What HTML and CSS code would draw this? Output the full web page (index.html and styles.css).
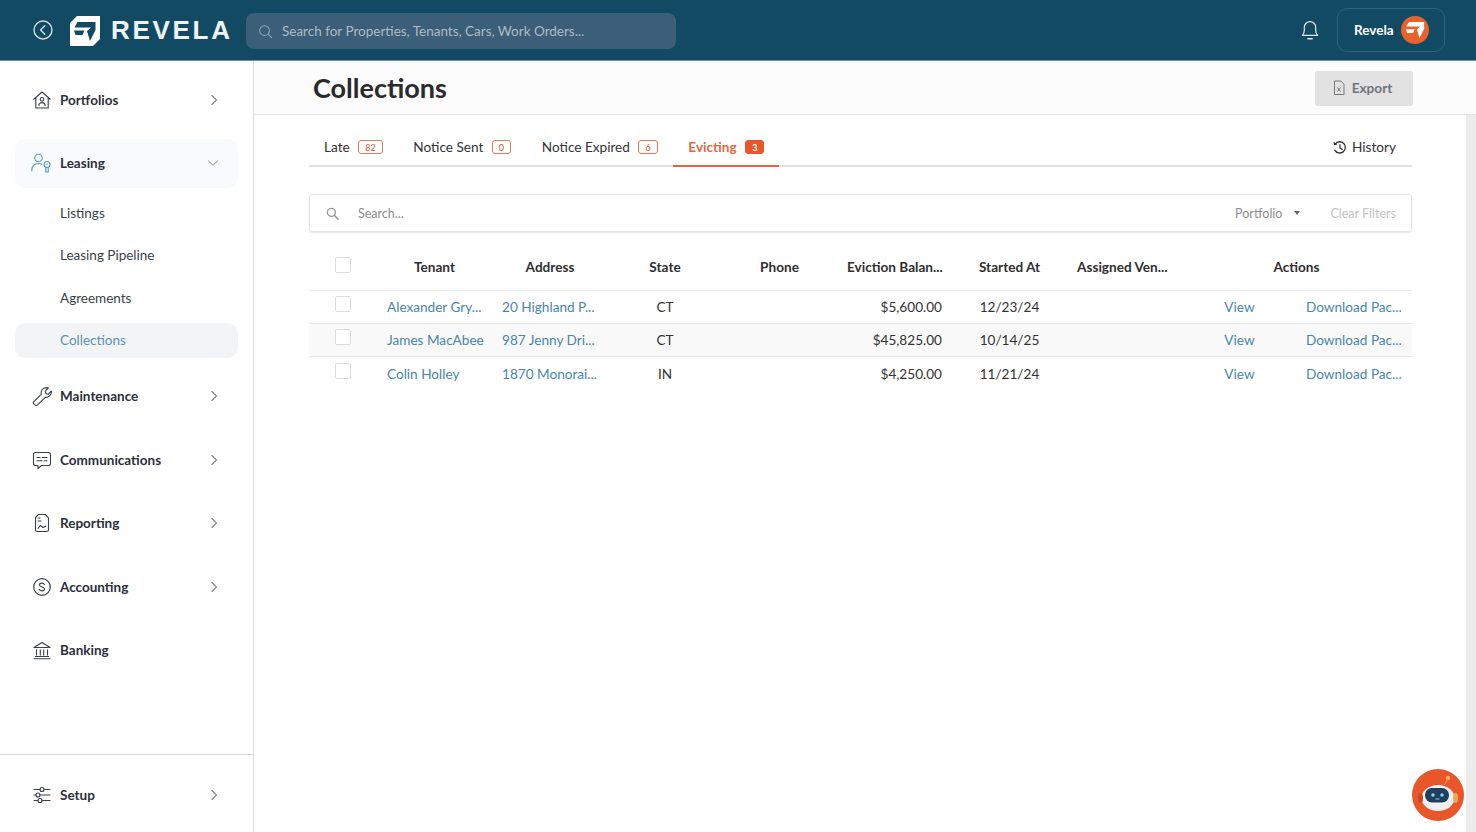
FILE: index.html
```html
<!DOCTYPE html>
<html lang="en">
<head>
<meta charset="utf-8">
<title>Collections</title>
<link rel="stylesheet" href="styles.css">
</head>
<body>
<header class="topbar">
  <svg class="back" viewBox="0 0 20 20" width="20" height="20"><circle cx="10" cy="10" r="9" fill="none" stroke="#cfe0e6" stroke-width="1.4"/><path d="M11.8 5.8 7.6 10l4.2 4.2" fill="none" stroke="#cfe0e6" stroke-width="1.4" stroke-linecap="round" stroke-linejoin="round"/></svg>
  <svg class="logo" viewBox="0 0 30 30" width="30" height="30"><path d="M7 0H30V23L23 30H0V7Z" fill="#fff"/><path d="M4.500 11.500 7.500 6H25.500V14L20 25 17 15 21 11.500Z" fill="#134a63"/><path d="M4 14.500H14.500L12.500 19H5.500Z" fill="#134a63"/></svg>
  <span class="wordmark">REVELA</span>
  <div class="globalsearch">
    <svg viewBox="0 0 16 16" width="15" height="15"><circle cx="7" cy="7" r="5.2" fill="none" stroke="#8ea3b3" stroke-width="1.1"/><path d="m11 11 3.6 3.6" stroke="#8ea3b3" stroke-width="1.1" stroke-linecap="round"/></svg>
    <span>Search for Properties, Tenants, Cars, Work Orders...</span>
  </div>
  <svg class="bell" viewBox="0 0 20 22" width="22" height="24"><path d="M3 16c1.3-1.3 1.8-2.6 1.8-5V8.500a5.200 5.200 0 0 1 10.400 0V11c0 2.400.5 3.700 1.800 5Z" fill="none" stroke="#dfeaee" stroke-width="1.100" stroke-linejoin="round"/><path d="M8 19h4" stroke="#dfeaee" stroke-width="1.300" stroke-linecap="round"/></svg>
  <div class="userbox">
    <span>Revela</span>
    <svg viewBox="0 0 28 28" width="28" height="28"><circle cx="14" cy="14" r="14" fill="#e8622c"/><g transform="translate(1.500 .8) scale(.85)"><path d="M4.500 11.500 7.500 6H25.500V14L20 25 17 15 21 11.500Z" fill="#fff"/><path d="M4 14.500H14.500L12.500 19H5.500Z" fill="#fff"/></g></svg>
  </div>
</header>
<div class="body">
  <aside class="sidebar">
    <nav class="nav">
      <a class="item"><svg viewBox="0 0 20 20" width="20" height="20"><path d="M1.500 9.500 10 2l8.500 7.500M3.800 8v10h12.400V8" fill="none" stroke="#3a3f4a" stroke-width="1.100" stroke-linejoin="round"/><circle cx="10" cy="9.300" r="1.800" fill="none" stroke="#3a3f4a" stroke-width="1.100"/><path d="M6.800 16c0-2.200 1.400-3.400 3.200-3.400s3.200 1.200 3.200 3.400" fill="none" stroke="#3a3f4a" stroke-width="1.100"/></svg><span>Portfolios</span><svg class="chev" viewBox="0 0 10 12" width="10" height="12"><path d="m3 1.500 4.500 4.500L3 10.500" fill="none" stroke="#7b7f86" stroke-width="1.100" stroke-linecap="round"/></svg></a>
      <a class="item open"><svg class="leaseicon" viewBox="0 0 22 20" width="22" height="20"><circle cx="7.500" cy="5" r="3.700" fill="none" stroke="#5b97b5" stroke-width="1.100"/><path d="M.8 18c0-5 2.800-7.500 6.700-7.500 1.300 0 2.400.3 3.300.8" fill="none" stroke="#5b97b5" stroke-width="1.100" stroke-linecap="round"/><circle cx="16" cy="11.500" r="3" fill="none" stroke="#5b97b5" stroke-width="1.100"/><path d="M14.800 14.300V19h2.400v-4.700M16 10.500v1.600" fill="none" stroke="#5b97b5" stroke-width="1.100"/></svg><span>Leasing</span><svg class="chev" viewBox="0 0 12 10" width="12" height="10"><path d="m1.500 2.800 4.500 4.500 4.500-4.500" fill="none" stroke="#a6acb2" stroke-width="1.100" stroke-linecap="round"/></svg></a>
      <div class="sublist">
        <a class="sub">Listings</a>
        <a class="sub">Leasing Pipeline</a>
        <a class="sub">Agreements</a>
        <a class="sub current">Collections</a>
      </div>
      <a class="item"><svg viewBox="0 0 20 20" width="20" height="20"><path d="M1.800 15.600 9.300 8.300C8.500 5 10.600 1.700 14.300 1.600c.8 0 1.500.1 2 .4l-3.100 3.100.7 2.400 2.400.7L19.300 5c.6 3.700-2.200 6.800-6 6.300l-7.500 7.400c-.9.900-2.200.9-3.200 0l-.8-.8c-.7-.700-.7-1.600 0-2.300Z" fill="none" stroke="#3a3f4a" stroke-width="1.100" stroke-linejoin="round"/></svg><span>Maintenance</span><svg class="chev" viewBox="0 0 10 12" width="10" height="12"><path d="m3 1.500 4.500 4.500L3 10.500" fill="none" stroke="#7b7f86" stroke-width="1.100" stroke-linecap="round"/></svg></a>
      <a class="item"><svg viewBox="0 0 20 20" width="20" height="20"><path d="M3.500 2.500h13c1.100 0 2 .9 2 2v9c0 1.100-.9 2-2 2H9.500L6 18.700v-3.200H3.500c-1.100 0-2-.9-2-2v-9c0-1.100.9-2 2-2Z" fill="none" stroke="#3a3f4a" stroke-width="1.100" stroke-linejoin="round"/><path d="M5 7.500h3M10 7.500h5M5 10.800h5M12 10.800h3" stroke="#3a3f4a" stroke-width="1.100" stroke-linecap="round"/></svg><span>Communications</span><svg class="chev" viewBox="0 0 10 12" width="10" height="12"><path d="m3 1.500 4.500 4.500L3 10.500" fill="none" stroke="#7b7f86" stroke-width="1.100" stroke-linecap="round"/></svg></a>
      <a class="item"><svg viewBox="0 0 20 20" width="20" height="20"><path d="M6.500 1.500h6.800l3.200 3.400v12c0 .9-.7 1.600-1.600 1.600H5.100c-.9 0-1.600-.7-1.600-1.600V4.500Z" fill="none" stroke="#3a3f4a" stroke-width="1.100" stroke-linejoin="round"/><path d="M6 5h2M6 8h3M6 15.500l2.500-3 2.500 2 3-1.500" fill="none" stroke="#3a3f4a" stroke-width="1.100" stroke-linecap="round"/></svg><span>Reporting</span><svg class="chev" viewBox="0 0 10 12" width="10" height="12"><path d="m3 1.500 4.500 4.500L3 10.500" fill="none" stroke="#7b7f86" stroke-width="1.100" stroke-linecap="round"/></svg></a>
      <a class="item"><svg viewBox="0 0 20 20" width="20" height="20"><circle cx="10" cy="10" r="8.300" fill="none" stroke="#3a3f4a" stroke-width="1.200"/><path d="M12.500 7.400c-.5-.9-1.400-1.300-2.500-1.300-1.400 0-2.500.7-2.500 1.900 0 2.600 5.100 1.300 5.100 4 0 1.200-1.200 1.900-2.600 1.900-1.200 0-2.200-.5-2.700-1.400" fill="none" stroke="#3a3f4a" stroke-width="1.100" stroke-linecap="round"/></svg><span>Accounting</span><svg class="chev" viewBox="0 0 10 12" width="10" height="12"><path d="m3 1.500 4.500 4.500L3 10.500" fill="none" stroke="#7b7f86" stroke-width="1.100" stroke-linecap="round"/></svg></a>
      <a class="item"><svg viewBox="0 0 20 20" width="20" height="20"><path d="M2 7.500 10 2.500l8 5ZM4.500 9.500v6M8.300 9.500v6M11.700 9.500v6M15.500 9.500v6M3 16.500h14M1.500 18.800h17" fill="none" stroke="#3a3f4a" stroke-width="1.100" stroke-linejoin="round"/></svg><span>Banking</span></a>
    </nav>
    <div class="sidefoot">
      <a class="item"><svg viewBox="0 0 20 20" width="20" height="20"><path d="M2 4.500h6M12 4.500h6M2 10h2M8 10h10M2 15.500h4M10 15.500h8" stroke="#3a3f4a" stroke-width="1.100" stroke-linecap="round"/><circle cx="10" cy="4.500" r="2" fill="none" stroke="#3a3f4a" stroke-width="1.100"/><circle cx="6" cy="10" r="2" fill="none" stroke="#3a3f4a" stroke-width="1.100"/><circle cx="8" cy="15.500" r="2" fill="none" stroke="#3a3f4a" stroke-width="1.100"/></svg><span>Setup</span><svg class="chev" viewBox="0 0 10 12" width="10" height="12"><path d="m3 1.500 4.500 4.500L3 10.500" fill="none" stroke="#7b7f86" stroke-width="1.100" stroke-linecap="round"/></svg></a>
    </div>
  </aside>
  <main class="main">
    <div class="titlebar">
      <h1>Collections</h1>
      <button class="export"><svg viewBox="0 0 14 16" width="14" height="16"><path d="M2.500 1h6.300L12 4.300v10.200H2.500Z" fill="none" stroke="#777" stroke-width="1"/><path d="M5.500 7.500l3 4M8.500 7.500l-3 4" stroke="#777" stroke-width="1"/></svg>Export</button>
    </div>
    <div class="contentrow">
      <div class="content">
        <div class="tabs">
          <a class="tab">Late<b class="badge">82</b></a>
          <a class="tab">Notice Sent<b class="badge">0</b></a>
          <a class="tab">Notice Expired<b class="badge">6</b></a>
          <a class="tab active">Evicting<b class="badge">3</b></a>
          <a class="history"><svg viewBox="0 0 16 16" width="15" height="15"><path d="M3.500 4.200A6 6 0 1 1 3 10.800" fill="none" stroke="#333" stroke-width="1.400" stroke-linecap="round"/><path d="M1.500 1.800 2.200 5.600 6 4.900Z" fill="#333"/><path d="M8.500 5v3.500l2.300 1.500" fill="none" stroke="#333" stroke-width="1.300" stroke-linecap="round"/></svg>History</a>
        </div>
        <div class="filters">
          <svg viewBox="0 0 14 14" width="13" height="13"><circle cx="5.800" cy="5.800" r="4.300" fill="none" stroke="#9a9a9a" stroke-width="1.500"/><path d="m9 9 4 4" stroke="#9a9a9a" stroke-width="1.700" stroke-linecap="round"/></svg>
          <span class="ph">Search...</span>
          <span class="pf">Portfolio</span><i class="caret"></i>
          <span class="clear">Clear Filters</span>
        </div>
        <table class="grid">
          <colgroup><col class="c0"><col class="c1"><col class="c2"><col class="c3"><col class="c4"><col class="c5"><col class="c6"><col class="c7"><col class="c8"><col class="c9"></colgroup>
          <thead>
            <tr><th><i class="check"></i></th><th>Tenant</th><th>Address</th><th>State</th><th>Phone</th><th>Eviction Balan...</th><th>Started At</th><th class="left">Assigned Ven...</th><th colspan="2">Actions</th></tr>
          </thead>
          <tbody>
            <tr><td class="cb"><i class="check"></i></td><td class="link">Alexander Gry...</td><td class="link">20 Highland P...</td><td class="mid">CT</td><td></td><td class="num">$5,600.00</td><td class="mid">12/23/24</td><td></td><td class="link mid view">View</td><td class="link">Download Pac...</td></tr>
            <tr class="alt"><td class="cb"><i class="check"></i></td><td class="link">James MacAbee</td><td class="link">987 Jenny Dri...</td><td class="mid">CT</td><td></td><td class="num">$45,825.00</td><td class="mid">10/14/25</td><td></td><td class="link mid view">View</td><td class="link">Download Pac...</td></tr>
            <tr><td class="cb"><i class="check"></i></td><td class="link">Colin Holley</td><td class="link">1870 Monorai...</td><td class="mid">IN</td><td></td><td class="num">$4,250.00</td><td class="mid">11/21/24</td><td></td><td class="link mid view">View</td><td class="link">Download Pac...</td></tr>
          </tbody>
        </table>
      </div>
      <div class="scrolltrack"></div>
    </div>
  </main>
</div>
<div class="bot">
  <svg viewBox="0 0 52 52" width="52" height="52"><circle cx="26" cy="26" r="26" fill="#e8562a"/><circle cx="36" cy="9" r="2.200" fill="#f6b04a"/><path d="M36 10 32 16" stroke="#f0a060" stroke-width="1"/><ellipse cx="26" cy="29" rx="16.500" ry="13" fill="#eef0f2"/><rect x="13" y="19" width="24" height="14.500" rx="7" fill="#1f3f5c"/><circle cx="21" cy="26" r="1.800" fill="#7fd4ef"/><circle cx="30" cy="26" r="1.800" fill="#7fd4ef"/><path d="M23.500 30h4" stroke="#7fd4ef" stroke-width="1"/><ellipse cx="43.500" cy="29" rx="2.500" ry="5" fill="#f2a65a"/><ellipse cx="8.500" cy="29" rx="2.500" ry="5" fill="#c94a22"/></svg>
</div>
</body>
</html>
```

FILE: styles.css
```css
* { box-sizing: border-box; }
html, body { margin: 0; height: 100%; overflow: hidden; }
body { display: flex; flex-direction: column; font-family: Lato, "Liberation Sans", sans-serif; font-size: 13.6px; color: #333; background: #fff; }
a { display: block; }

.topbar { flex: 0 0 61px; background: #134a63; border-bottom: 1px solid #6d93a5; display: flex; align-items: center; padding: 0 31px 0 33px; }
.back { margin-right: 17px; }
.logo { margin-right: 11px; margin-top: 1px; }
.wordmark { font-family: "Liberation Sans", sans-serif; font-weight: 700; font-size: 26px; letter-spacing: 2.7px; color: #eef4f6; width: 135px; }
.globalsearch { width: 430px; height: 36px; margin-top: 2px; background: #3b5f79; border-radius: 8px; display: flex; align-items: center; gap: 9px; padding-left: 12px; color: #adbac5; font-size: 13.5px; }
.bell { margin-left: auto; margin-right: 16px; }
.userbox { width: 108px; height: 44px; border: 1px solid #2f6278; border-radius: 10px; display: flex; align-items: center; gap: 7px; padding-left: 16px; color: #fff; font-weight: 700; font-size: 13.5px; }

.body { flex: 1; display: flex; min-height: 0; }
.sidebar { flex: 0 0 254px; border-right: 1px solid #dcdcdc; display: flex; flex-direction: column; justify-content: space-between; }
.nav { display: flex; flex-direction: column; padding: 14.1px 15px 0; gap: 14.5px; }
.item { display: flex; align-items: center; height: 49px; padding-left: 17px; gap: 8px; color: #2b2f3a; font-weight: 700; font-size: 13.5px; border-radius: 10px; }
.item > span { flex: 1; }
.chev { margin-right: 19px; }
.item.open { background: #f9fafb; }
.leaseicon { margin-left: -1px; margin-right: -1px; }
.sublist { display: flex; flex-direction: column; margin: -14px 0 -.5px; padding-top: 4px; }
.sub { height: 42.33px; line-height: 42.33px; padding-left: 45px; color: #3a3f48; font-size: 13.5px; }
.sub.current { height: 35px; line-height: 35px; margin-top: 3.5px; background: #f3f4f6; border-radius: 10px; color: #5c93b0; }
.sidefoot { height: 78px; border-top: 1px solid #d8d8d8; padding: 15px 15px 0; flex-shrink: 0; }

.main { flex: 1; display: flex; flex-direction: column; min-width: 0; }
.titlebar { flex: 0 0 54px; background: #fcfcfc; border-bottom: 1px solid #e4e4e4; display: flex; align-items: center; justify-content: space-between; padding: 0 63px 0 59px; }
h1 { margin: 0; font-size: 27px; font-weight: 700; color: #2b2b2b; }
.export { width: 98px; height: 35px; margin-top: 1px; padding: 0 4px 0 0; background: #e2e2e2; border: 0; border-radius: 3px; display: flex; align-items: center; justify-content: center; gap: 6px; font: 700 13.6px Lato, sans-serif; color: #70757a; }

.contentrow { flex: 1; display: flex; min-height: 0; }
.content { flex: 1; padding: 0 54px 0 55px; min-width: 0; }
.scrolltrack { flex: 0 0 10px; background: #ececec; }

.tabs { height: 52px; border-bottom: 2px solid #e2e2e2; display: flex; align-items: flex-end; }
.tab { height: 38px; margin-bottom: -2px; padding: 0 15px; margin-right: .7px; display: flex; align-items: center; gap: 8.5px; color: #333; border-bottom: 2px solid transparent; }
.badge { min-width: 19px; padding: 0 6px; height: 14px; border: 1px solid #dc7d5c; border-radius: 3px; font-size: 9px; font-weight: 400; color: #c4553a; display: inline-flex; align-items: center; justify-content: center; }
.tab.active { color: #e06a3f; font-weight: 700; border-bottom-color: #e8623a; }
.tab.active .badge { background: #e8562a; color: #fff; border-color: #e8562a; font-weight: 700; }
.history { height: 38px; margin-bottom: -2px; padding: 0 16px 2px 0; margin-left: auto; display: flex; align-items: center; gap: 5px; color: #333; }

.filters { margin-top: 27px; height: 38px; border: 1px solid #e6e6e6; border-radius: 3px; box-shadow: 0 1px 2px rgba(0,0,0,.1); display: flex; align-items: center; padding: 0 15px 0 16px; font-size: 12.5px; }
.ph { margin-left: 19px; flex: 1; color: #8c8c8c; }
.pf { color: #8c8c8c; }
.caret { width: 0; height: 0; margin: 0 30px 0 12px; border: 3.5px solid transparent; border-top: 4px solid #666; border-bottom: 0; }
.clear { color: #c4c4c4; }

.grid { width: 100%; table-layout: fixed; border-collapse: collapse; margin-top: 16px; }
.c0 { width: 68px; } .c1 { width: 115px; } .c2 { width: 116px; } .c3 { width: 114px; } .c4 { width: 115px; } .c5 { width: 115px; } .c6 { width: 115px; } .c7 { width: 114px; } .c8 { width: 115px; } .c9 { width: 116px; }
th { height: 42px; padding: 0 10px 4px; font-weight: 700; color: #2f2f2f; text-align: center; border-bottom: 1px solid #ececec; white-space: nowrap; }
th.left { text-align: left; }
td { height: 33.4px; padding: 0 10px; white-space: nowrap; color: #333; }
tbody tr { border-bottom: 1px solid #e8e8e8; }
tbody tr:last-child { border-bottom: 0; }
tr.alt { background: #f9f9f9; }
.check { display: block; width: 16px; height: 16px; margin: 0 auto; border: 1px solid #dcdcdc; border-radius: 2px; background: #fff; }
th .check { position: relative; top: -2px; }
td.cb .check { position: relative; top: -3px; }
.link { color: #4a86ab; }
.mid { text-align: center; }
.view { padding-left: 12px; }
.num { text-align: right; }

.bot { position: absolute; left: 1412px; top: 769px; width: 52px; height: 52px; }
.bot svg { display: block; }
```
